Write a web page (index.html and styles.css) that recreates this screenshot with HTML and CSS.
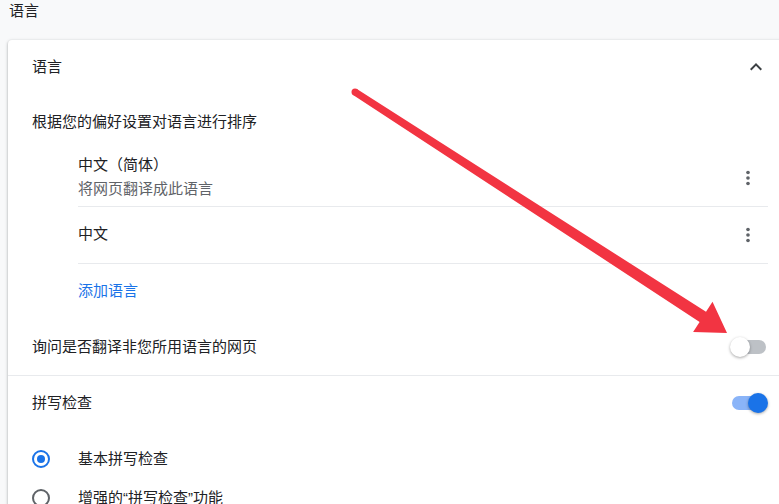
FILE: index.html
```html
<!DOCTYPE html>
<html lang="zh-CN">
<head>
<meta charset="utf-8">
<title>语言</title>
<link rel="stylesheet" href="styles.css">
</head>
<body>
<div class="page">
  <h2 class="page-title">语言</h2>
  <section class="card">
    <div class="card-head">
      <span class="txt">语言</span>
      <span class="icon-btn">
        <svg viewBox="0 0 24 24" width="24" height="24"><path d="M12 8l-6 6 1.41 1.41L12 10.83l4.59 4.58L18 14z" fill="#3c4043"/></svg>
      </span>
    </div>
    <div class="row sub"><span class="txt">根据您的偏好设置对语言进行排序</span></div>
    <div class="lang-list">
      <div class="lang-item">
        <div class="lang-text">
          <div class="lang-name">中文（简体）</div>
          <div class="lang-note">将网页翻译成此语言</div>
        </div>
        <span class="kebab"><svg viewBox="0 0 24 24" width="22" height="22"><circle cx="12" cy="6" r="2" fill="#5f6368"/><circle cx="12" cy="12" r="2" fill="#5f6368"/><circle cx="12" cy="18" r="2" fill="#5f6368"/></svg></span>
      </div>
      <div class="lang-item">
        <div class="lang-text">
          <div class="lang-name">中文</div>
        </div>
        <span class="kebab"><svg viewBox="0 0 24 24" width="22" height="22"><circle cx="12" cy="6" r="2" fill="#5f6368"/><circle cx="12" cy="12" r="2" fill="#5f6368"/><circle cx="12" cy="18" r="2" fill="#5f6368"/></svg></span>
      </div>
      <div class="add-lang"><span class="txt">添加语言</span></div>
    </div>
    <div class="row toggle-row ask">
      <span class="txt">询问是否翻译非您所用语言的网页</span>
      <span class="toggle"><span class="track"></span><span class="knob"></span></span>
    </div>
    <div class="row toggle-row spell">
      <span class="txt">拼写检查</span>
      <span class="toggle on"><span class="track"></span><span class="knob"></span></span>
    </div>
    <div class="radio-group">
      <div class="radio-row"><span class="radio checked"></span><span class="txt">基本拼写检查</span></div>
      <div class="radio-row"><span class="radio"></span><span class="txt">增强的“拼写检查”功能</span></div>
    </div>
  </section>
</div>
<svg class="arrow" viewBox="0 0 779 504" width="779" height="504">
  <polygon points="356.9,89.1 706.0,311.8 712.5,301.7 727,333 693.1,331.9 699.6,321.9 353.1,94.9" fill="#f23442"/>
  <circle cx="355" cy="92" r="3.5" fill="#f23442"/>
</svg>
</body>
</html>
```

FILE: styles.css
```css
html, body {
  margin: 0;
  padding: 0;
}
body {
  width: 779px;
  height: 504px;
  overflow: hidden;
  background: #f8f9fa;
  font-family: "Liberation Sans", "Noto Sans CJK SC", sans-serif;
  color: #202124;
  font-size: 15px;
  position: relative;
}
.page {
  display: flex;
  flex-direction: column;
}
.txt {
  padding-bottom: 3px;
}
.page-title {
  margin: 0 0 16px 0;
  padding: 0 0 2px 9px;
  height: 22px;
  line-height: 22px;
  font-size: 15px;
  font-weight: normal;
  color: #202124;
}
.card {
  margin-left: 8px;
  width: 784px;
  flex: none;
  background: #fff;
  border-radius: 4px;
  box-shadow: 0 1px 2px rgba(60,64,67,.3), 0 1px 3px 1px rgba(60,64,67,.15);
  display: flex;
  flex-direction: column;
}
.card-head {
  height: 54px;
  padding: 0 24px;
  display: flex;
  align-items: center;
  justify-content: space-between;
}
.icon-btn {
  display: flex;
  width: 24px;
  height: 24px;
}
.row {
  padding: 0 24px;
  display: flex;
  align-items: center;
}
.sub {
  height: 56px;
}
.lang-list {
  margin-left: 70px;
  margin-right: 24px;
  display: flex;
  flex-direction: column;
}
.lang-item {
  height: 56px;
  border-bottom: 1px solid #e8eaed;
  display: flex;
  align-items: center;
  justify-content: space-between;
}
.lang-text {
  line-height: 24px;
  padding-bottom: 3px;
}
.lang-note {
  color: #5f6368;
}
.kebab {
  width: 40px;
  height: 40px;
  display: flex;
  align-items: center;
  justify-content: center;
}
.add-lang {
  height: 54px;
  display: flex;
  align-items: center;
  color: #1a73e8;
}
.toggle-row {
  justify-content: space-between;
}
.ask {
  height: 57px;
}
.spell {
  height: 54px;
  border-top: 1px solid #e8eaed;
}
.toggle {
  position: relative;
  width: 38px;
  height: 20px;
  display: block;
}
.toggle .track {
  position: absolute;
  left: 2px;
  top: 3px;
  width: 34px;
  height: 14px;
  border-radius: 7px;
  background: #bdc1c6;
}
.toggle .knob {
  position: absolute;
  left: 0;
  top: 0;
  width: 20px;
  height: 20px;
  border-radius: 50%;
  background: #fff;
  box-shadow: 0 1px 3px rgba(0,0,0,.35);
}
.toggle.on .track {
  background: #8ab4f8;
}
.toggle.on .knob {
  left: 18px;
  background: #1a73e8;
}
.radio-group {
  padding: 9px 24px 0 24px;
  display: flex;
  flex-direction: column;
}
.radio-row {
  height: 39px;
  display: flex;
  align-items: center;
}
.radio {
  width: 14px;
  height: 14px;
  border-radius: 50%;
  border: 2px solid #5f6368;
  margin-right: 28px;
  flex: none;
  position: relative;
}
.radio.checked {
  border-color: #1a73e8;
}
.radio.checked::after {
  content: "";
  position: absolute;
  left: 3px;
  top: 3px;
  width: 8px;
  height: 8px;
  border-radius: 50%;
  background: #1a73e8;
}
.arrow {
  position: absolute;
  left: 0;
  top: 0;
  pointer-events: none;
}
```
